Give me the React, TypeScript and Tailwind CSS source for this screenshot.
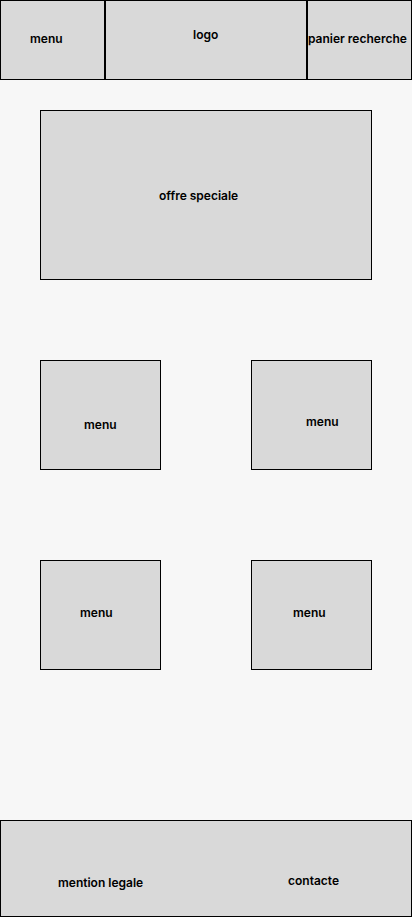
type BoxProps = {
  label: string
  box: string
  text: string
}

// wireframe block: grey fill, thin black border, label placed by padding
function Box({ label, box, text }: BoxProps) {
  return (
    <div className={`shrink-0 border border-black bg-[#d9d9d9] ${box}`}>
      <p className={`whitespace-nowrap text-[12px] leading-[15px] font-semibold text-black ${text}`}>{label}</p>
    </div>
  )
}

export default function App() {
  return (
    <div className="min-h-[917px] w-[412px] bg-[#f7f7f7] font-['Inter','Liberation_Sans',sans-serif] flex flex-col">
      {/* header */}
      <div className="flex h-[80px]">
        <Box label="menu" box="w-[105px] h-[80px]" text="pl-[29px] pt-[30px]" />
        <Box label="logo" box="w-[202px] h-[80px]" text="pl-[87px] pt-[26px]" />
        <Box label="panier recherche" box="w-[105px] h-[80px]" text="pl-0 pt-[30px]" />
      </div>

      {/* offre */}
      <div className="px-[40px] pt-[30px]">
        <Box label="offre speciale" box="w-[332px] h-[170px]" text="pl-[118px] pt-[77px]" />
      </div>

      {/* grille menus */}
      <div className="flex justify-between px-[40px] pt-[80px]">
        <Box label="menu" box="w-[121px] h-[110px]" text="pl-[43px] pt-[56px]" />
        <Box label="menu" box="w-[121px] h-[110px]" text="pl-[54px] pt-[53px]" />
      </div>
      <div className="flex justify-between px-[40px] pt-[90px]">
        <Box label="menu" box="w-[121px] h-[110px]" text="pl-[39px] pt-[44px]" />
        <Box label="menu" box="w-[121px] h-[110px]" text="pl-[41px] pt-[44px]" />
      </div>

      {/* footer */}
      <div className="mt-[150px] flex h-[97px] border border-black bg-[#d9d9d9]">
        <p className="w-[230px] whitespace-nowrap pl-[57px] pt-[54px] text-[12px] leading-[15px] font-semibold text-black">mention legale</p>
        <p className="whitespace-nowrap pl-[57px] pt-[52px] text-[12px] leading-[15px] font-semibold text-black">contacte</p>
      </div>
    </div>
  )
}
